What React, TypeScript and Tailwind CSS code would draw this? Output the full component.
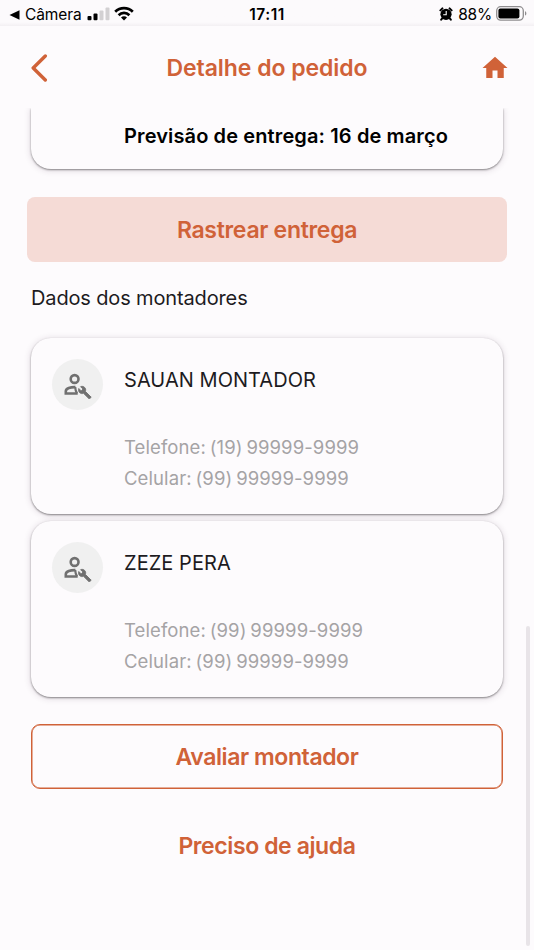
import React from "react";
import { MdHome } from "react-icons/md";

interface Assembler {
  name: string;
  phone: string;
  mobile: string;
}

const assemblers: Assembler[] = [
  { name: "SAUAN MONTADOR", phone: "(19) 99999-9999", mobile: "(99) 99999-9999" },
  { name: "ZEZE PERA", phone: "(99) 99999-9999", mobile: "(99) 99999-9999" },
];

const StatusBar: React.FC = () => (
  <div className="grid h-[26px] grid-cols-3 items-center bg-linear-to-b from-[#fcfafc] from-85% to-[#f3f0f3] pt-[3px] text-black">
    <div className="flex items-center pl-[9px]">
      <svg width="11" height="10" viewBox="0 0 11 10">
        <path d="M0.5 5L10.5 0.3v9.4z" />
      </svg>
      <span className="ml-[5px] text-[15.5px] leading-5 tracking-[-0.1px]">Câmera</span>
      <svg className="-mt-px ml-[5px]" width="23" height="14" viewBox="0 0 23 14">
        <rect x="0.5" y="9" width="4" height="4.2" rx="1" />
        <rect x="6.5" y="6.6" width="4" height="6.6" rx="1" />
        <rect x="12.5" y="3.6" width="4" height="9.6" rx="1" fill="#d2d0d2" />
        <rect x="18.5" y="0.4" width="4" height="12.8" rx="1" fill="#d2d0d2" />
      </svg>
      <svg className="-mt-[2px] ml-[4px]" width="20" height="15" viewBox="0 0 20 15">
        <g fill="none" stroke="#000" strokeWidth="2.7">
          <path d="M1.2 5.7a12.5 12.5 0 0 1 17.6 0" />
          <path d="M4.6 9.2a7.6 7.6 0 0 1 10.8 0" />
        </g>
        <path d="M10 14.4L7 11.5a4.2 4.2 0 0 1 6 0z" />
      </svg>
    </div>
    <span className="text-center text-[15.5px] leading-5 font-semibold tracking-[0.5px]">17:11</span>
    <div className="flex items-center justify-end pr-[7px]">
      <svg className="-mt-px" width="14" height="14" viewBox="0 0 14 14">
        <circle cx="7" cy="7.3" r="5.6" />
        <path
          d="M1.4 3.4L3.4 1.4M12.6 3.4L10.6 1.4M3.2 11.3L2.2 12.6M10.8 11.3l1 1.3"
          stroke="#000"
          strokeWidth="2"
          strokeLinecap="round"
        />
        <path d="M7.2 4v3.8H4.2" fill="none" stroke="#fff" strokeWidth="1.1" />
      </svg>
      <span className="ml-[5px] text-[15.5px] leading-5 tracking-[-0.2px]">88%</span>
      <svg className="-mt-[2px] ml-[4px]" width="31" height="15" viewBox="0 0 31 15">
        <rect x="0.7" y="0.7" width="26.6" height="13.4" rx="4" fill="none" stroke="#8f8d8f" strokeWidth="1.3" />
        <rect x="2.4" y="2.4" width="21" height="10" rx="2" />
        <path d="M29 5.2c1.8 0.6 1.8 3.8 0 4.4z" fill="#8f8d8f" />
      </svg>
    </div>
  </div>
);

const Header: React.FC = () => (
  <header className="flex h-[82px] items-center justify-between pt-[2px] pr-[24px] pl-[30px] text-[#d06238]">
    <svg width="24" height="28" viewBox="0 0 24 28">
      <path
        d="M15.3 2L3.2 14l12.1 12"
        fill="none"
        stroke="currentColor"
        strokeWidth="3.4"
        strokeLinecap="round"
        strokeLinejoin="round"
      />
    </svg>
    <h1 className="text-[23px] leading-7 font-semibold tracking-[-0.05px]">Detalhe do pedido</h1>
    <MdHome className="size-[30px]" />
  </header>
);

const AssemblerIcon: React.FC = () => (
  <div className="flex size-[51px] shrink-0 items-center justify-center rounded-full bg-[#f0f0f0]">
    <svg width="28" height="28" viewBox="0 0 28 28" className="text-[#707070]">
      <g fill="none" stroke="currentColor" strokeWidth="2.6">
        <circle cx="10.6" cy="8" r="3.9" />
        <path d="M11.4 16.1C6.6 15.9 1.8 17.5 1.8 20.2v2.3h11.9" />
        <path d="M11.2 16c0.1 2.5 0.6 4.6 1.8 6.4" strokeWidth="2.2" />
      </g>
      <path
        transform="translate(0.2 2.6)"
        fill="currentColor"
        stroke="currentColor"
        strokeWidth="0.9"
        strokeLinejoin="round"
        d="M27 23.6l-5.8-5.8c0.6-1.6 0.2-3.1-0.8-4-1.1-1.1-2.8-1.3-4-0.7l2.4 2.4-1.8 1.8-2.4-2.4c-0.6 1.3-0.3 2.9 0.7 4 1.1 1.1 2.6 1.4 4 0.8l5.8 5.7z"
      />
    </svg>
  </div>
);

const AssemblerCard: React.FC<Assembler> = ({ name, phone, mobile }) => (
  <div className="flex h-[176px] rounded-[20px] bg-[#fdfbfd] pt-[21px] pl-[21px] shadow-[0_1px_2px_rgba(0,0,0,0.42),0_1px_7px_rgba(60,30,60,0.18)]">
    <AssemblerIcon />
    <div className="ml-[21px] pt-[7px]">
      <p className="text-[20px] leading-7 tracking-[0.05px] text-[#1d1b1f]">{name}</p>
      <div className="mt-[38px] text-[18.5px] leading-[31px] tracking-[0.1px] [word-spacing:-1.5px] text-[#a5a3a5]">
        <p>Telefone: {phone}</p>
        <p>Celular: {mobile}</p>
      </div>
    </div>
  </div>
);

export default function App() {
  return (
    <div className="flex h-[950px] w-[534px] flex-col overflow-hidden bg-[#fdfbfd] font-[Inter,sans-serif]">
      <StatusBar />
      <Header />
      <main className="relative flex-1 overflow-hidden px-[31px]">
        <div className="h-[61px] rounded-b-[20px] bg-[#fdfbfd] pt-[14px] pl-[93px] shadow-[0_1px_2px_rgba(0,0,0,0.42),0_1px_7px_rgba(60,30,60,0.18)]">
          <p className="text-[20px] leading-7 font-semibold tracking-[0.12px] text-black">
            Previsão de entrega: 16 de março
          </p>
        </div>

        <button className="-mx-1 mt-[28px] block h-[65px] w-[480px] rounded-[8px] bg-[#f5dbd6] pt-[2px] text-[23px] font-semibold tracking-[-0.3px] text-[#d06238]">
          Rastrear entrega
        </button>

        <h2 className="mt-[22px] text-[20px] leading-7 tracking-[-0.14px] text-[#1d1b1f]">
          Dados dos montadores
        </h2>

        <div className="mt-[26px] flex flex-col gap-[7px]">
          {assemblers.map((assembler) => (
            <AssemblerCard key={assembler.name} {...assembler} />
          ))}
        </div>

        <button className="mt-[27px] block h-[65px] w-full rounded-[9px] border border-[#d06238] pt-[2px] text-[23px] font-semibold tracking-[-0.42px] text-[#d06238] shadow-[inset_0_0_0_0.5px_#d06238]">
          Avaliar montador
        </button>

        <button className="mt-[40px] block h-[32px] w-full text-[23px] font-semibold tracking-[-0.4px] text-[#d06238]">
          Preciso de ajuda
        </button>

        {/* scroll indicator */}
        <div className="absolute top-[518px] right-[4px] h-[320px] w-[4px] rounded-full bg-[#e8e4e8]" />
      </main>
    </div>
  );
}
